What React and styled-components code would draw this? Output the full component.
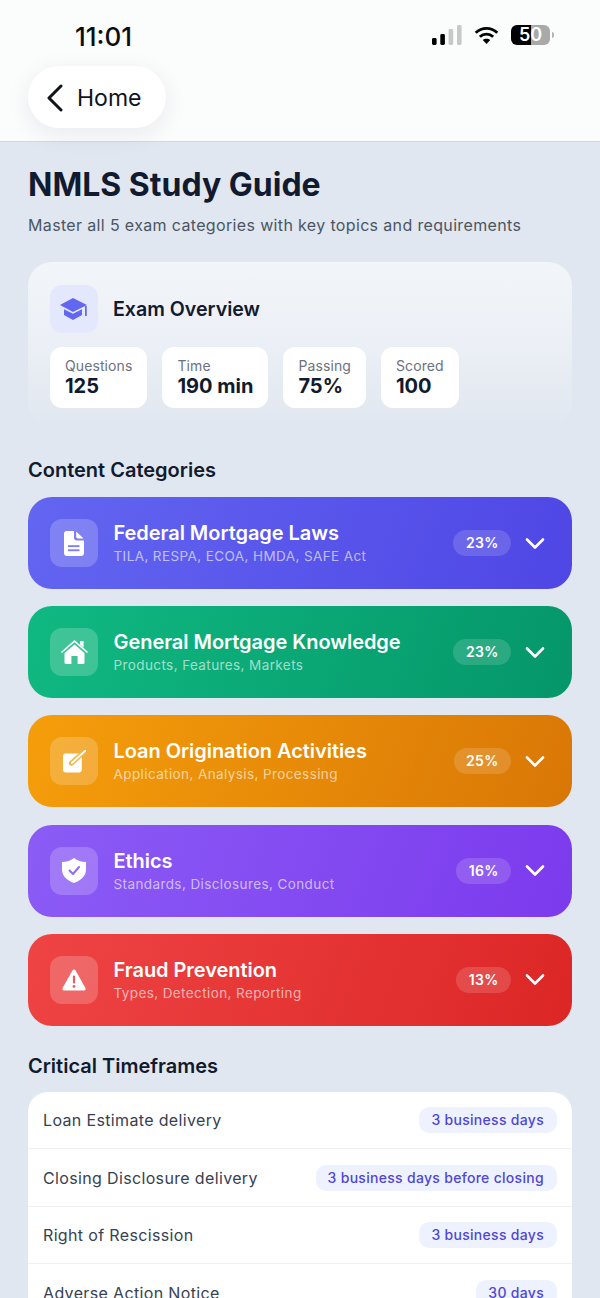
import React from "react";
import styled, { createGlobalStyle } from "styled-components";

const Global = createGlobalStyle`
  html, body { margin: 0; padding: 0; background: #e1e7f0; }
  body { font-family: Inter, "Liberation Sans", sans-serif; -webkit-font-smoothing: antialiased; }
  * { box-sizing: border-box; }
`;

const Page = styled.div`
  width: 600px;
  height: 1298px;
  overflow: hidden;
  background: #e1e7f0;
`;

const Header = styled.header`
  height: 142px;
  background: #fbfcfc;
  border-bottom: 1px solid #d4d8dd;
  padding: 0 28px;
`;

const StatusBar = styled.div`
  height: 66px;
  display: flex;
  align-items: center;
  justify-content: space-between;
  padding: 6px 18px 0 47px;
`;

const Clock = styled.span`
  font-size: 26px;
  font-weight: 500;
  color: #0b0d12;
`;

const StatusIcons = styled.div`
  display: flex;
  align-items: center;
  gap: 11px;
  margin-top: -2px;
`;

const Battery = styled.div`
  width: 39px;
  height: 20px;
  border-radius: 6px;
  background: linear-gradient(90deg, #000 51%, #a9a9a9 51%);
  color: #fff;
  font-size: 18px;
  font-weight: 600;
  line-height: 20px;
  text-align: center;
`;

const BatteryCap = styled.div`
  width: 2px;
  height: 6px;
  margin-left: -9px;
  border-radius: 0 2px 2px 0;
  background: #b5b5b5;
`;

const BackPill = styled.div`
  width: 138px;
  height: 62px;
  border-radius: 31px;
  background: #fff;
  box-shadow: 0 6px 24px rgba(20, 30, 50, 0.08);
  display: flex;
  align-items: center;
  gap: 13px;
  padding: 1px 0 0 18px;
  font-size: 23px;
  font-weight: 400;
  color: #10131a;
`;

const Main = styled.main`
  padding: 24px 28px 0;
`;

const Title = styled.h1`
  margin: 0;
  font-size: 32px;
  line-height: 38px;
  font-weight: 700;
  color: #111a2e;
`;

const Subtitle = styled.p`
  margin: 9px 0 0;
  font-size: 16px;
  line-height: 24px;
  letter-spacing: 0.35px;
  color: #4b5563;
`;

const Overview = styled.section`
  margin-top: 25px;
  height: 164px;
  border-radius: 24px;
  padding: 23px 22px;
  background: linear-gradient(180deg, #f2f5f9 0%, #edf1f7 40%, #e1e7f0 100%);
`;

const OverviewHead = styled.div`
  display: flex;
  align-items: center;
  gap: 15px;
`;

const OverviewIcon = styled.div`
  width: 48px;
  height: 48px;
  border-radius: 12px;
  background: #e4e8fd;
  display: flex;
  align-items: center;
  justify-content: center;
`;

const OverviewTitle = styled.h2`
  margin: 0 0 1px;
  font-size: 19.6px;
  font-weight: 600;
  color: #111a2e;
`;

const Stats = styled.div`
  display: flex;
  gap: 15px;
  margin-top: 14px;
`;

const Stat = styled.div`
  height: 61px;
  border-radius: 12px;
  background: #fff;
  padding: 10px 15px 0;
`;

const StatLabel = styled.div`
  font-size: 14px;
  line-height: 17px;
  letter-spacing: 0.1px;
  color: #6b7280;
`;

const StatValue = styled.div`
  font-size: 20px;
  line-height: 24px;
  font-weight: 700;
  color: #111a2e;
`;

const SectionTitle = styled.h2`
  margin: 32px 0 0;
  font-size: 20px;
  line-height: 24px;
  font-weight: 600;
  color: #111a2e;
`;

const Categories = styled.div`
  display: flex;
  flex-direction: column;
  gap: 17.2px;
  margin-top: 15px;
`;

const CategoryCard = styled.div`
  height: 92px;
  border-radius: 24px;
  padding: 0 27px 0 22px;
  display: flex;
  align-items: center;
  background: linear-gradient(110deg, ${(p) => p.$from}, ${(p) => p.$to});
`;

const CategoryIcon = styled.div`
  width: 48px;
  height: 48px;
  border-radius: 12px;
  background: rgba(255, 255, 255, 0.2);
  display: flex;
  align-items: center;
  justify-content: center;
  flex-shrink: 0;
`;

const CategoryText = styled.div`
  margin-left: 15.5px;
  flex: 1;
`;

const CategoryName = styled.div`
  font-size: 20px;
  line-height: 24px;
  font-weight: 600;
  letter-spacing: -0.05px;
  color: #fff;
`;

const CategoryTopics = styled.div`
  margin-top: 2px;
  font-size: 13.5px;
  line-height: 18px;
  letter-spacing: 0.4px;
  color: rgba(255, 255, 255, 0.62);
`;

const Percent = styled.div`
  height: 26px;
  padding: 0 12.5px;
  border-radius: 13px;
  background: rgba(255, 255, 255, 0.15);
  color: #fff;
  font-size: 14px;
  font-weight: 600;
  line-height: 26px;
  letter-spacing: 0.3px;
  margin-right: 14px;
`;

const TimeframesTitle = styled(SectionTitle)`
  margin-top: 28px;
`;

const Timeframes = styled.div`
  margin-top: 14px;
  border-radius: 20px;
  background: #fff;
`;

const TimeRow = styled.div`
  height: 57.5px;
  padding: 0 15px;
  display: flex;
  align-items: center;
  justify-content: space-between;
  border-bottom: 1px solid #eef0f4;
`;

const TimeLabel = styled.span`
  font-size: 16px;
  letter-spacing: 0.35px;
  color: #374151;
`;

const TimeValue = styled.span`
  height: 26px;
  padding: 0 13px 0 12px;
  border-radius: 10px;
  background: #eef2fe;
  color: #4f46d5;
  font-size: 14px;
  font-weight: 500;
  line-height: 26px;
  letter-spacing: 0.3px;
`;

const Signal = () => (
  <svg width="30" height="20" viewBox="0 0 30 20">
    <rect x="0" y="13" width="4.6" height="7" rx="1.4" fill="#000" />
    <rect x="8.3" y="9" width="4.6" height="11" rx="1.4" fill="#000" />
    <rect x="16.6" y="4" width="4.6" height="16" rx="1.4" fill="#c8c8c8" />
    <rect x="25" y="0" width="4.6" height="20" rx="1.4" fill="#c8c8c8" />
  </svg>
);

const Wifi = () => (
  <svg width="27" height="18" viewBox="0 0 28 20" fill="none" stroke="#000" strokeWidth="3.2">
    <path d="M2 7.5 C9 1 19 1 26 7.5" />
    <path d="M6.6 12 C11 8 17 8 21.4 12" />
    <path d="M14 20 L9.8 15.6 C12 13.6 16 13.6 18.2 15.6 Z" fill="#000" stroke="none" />
  </svg>
);

const Chevron = ({ size = 20 }) => (
  <svg width={size} height={size * 0.65} viewBox="0 0 20 13" fill="none" stroke="#fff" strokeWidth="2.6" strokeLinecap="round" strokeLinejoin="round">
    <path d="M2 2.5 L10 10.5 L18 2.5" />
  </svg>
);

const BackArrow = () => (
  <svg width="18" height="28" viewBox="0 0 18 28" fill="none" stroke="#10131a" strokeWidth="3" strokeLinecap="round" strokeLinejoin="round">
    <path d="M15 2 L3 14 L15 26" />
  </svg>
);

const CapIcon = () => (
  <svg width="28" height="22" viewBox="0 0 28 22">
    <path d="M13 0 L27 7 L13 14 L0 7 Z" fill="#6366f1" />
    <path d="M4 11.2 L13 15.8 L22 11.2 V17 L13 22 L4 17 Z" fill="#6366f1" />
    <rect x="25" y="8" width="1.7" height="10" fill="#6366f1" />
  </svg>
);

const DocIcon = () => (
  <svg width="20" height="25" viewBox="0 0 20 25">
    <path d="M2.5 0 H10 V6.5 Q10 9.5 13 9.5 H20 V22 Q20 25 17 25 H3 Q0 25 0 22 V2.5 Q0 0 2.5 0 Z" fill="#fff" />
    <path d="M12.2 0.6 L19.6 7.6 H14 Q12.2 7.6 12.2 5.8 Z" fill="#fff" />
    <rect x="4" y="14.2" width="11.5" height="1.9" fill="#817ff5" />
    <rect x="4" y="18.3" width="11.5" height="1.9" fill="#817ff5" />
  </svg>
);

const HomeIcon = () => (
  <svg width="27" height="24" viewBox="0 0 27 24">
    <path d="M1 12 L13.5 1.2 L26 12" fill="none" stroke="#fff" strokeWidth="1.6" strokeLinecap="round" strokeLinejoin="round" />
    <path d="M19 1 H22.6 V7.6 L19 4.4 Z" fill="#fff" />
    <path d="M13.5 4.4 L23.5 13 V22.5 Q23.5 24 22 24 H16.6 V16 H10.4 V24 H5 Q3.5 24 3.5 22.5 V13 Z" fill="#fff" />
  </svg>
);

const EditIcon = () => (
  <svg width="23" height="23" viewBox="0 0 23 23">
    <rect x="0" y="3.4" width="18.8" height="19" rx="2.4" fill="#fff" />
    <path d="M8.5 13.2 L17.5 5 L22.5 0.6" stroke="#f6b33f" strokeWidth="5" strokeLinecap="round" />
    <path d="M8.8 13 L22.4 0.8" stroke="#fff" strokeWidth="1.9" strokeLinecap="round" />
  </svg>
);

const ShieldIcon = () => (
  <svg width="24" height="25" viewBox="0 0 24 25">
    <path d="M12 0 C15.5 2.8 19.5 3.8 24 4 V11.5 C24 18 19 22.5 12 25 C5 22.5 0 18 0 11.5 V4 C4.5 3.8 8.5 2.8 12 0 Z" fill="#fff" />
    <path d="M7.5 12.5 L11 16 L17 9" fill="none" stroke="#8f6cf5" strokeWidth="2" strokeLinecap="round" strokeLinejoin="round" />
  </svg>
);

const AlertIcon = () => (
  <svg width="24" height="22" viewBox="0 0 24 22">
    <path d="M12 0.5 Q13 0.5 13.6 1.6 L23.4 19 Q24.2 21 22 21.4 H2 Q-0.2 21 0.6 19 L10.4 1.6 Q11 0.5 12 0.5 Z" fill="#fff" />
    <rect x="10.9" y="6.5" width="2.2" height="8" rx="1" fill="#ee5a60" />
    <circle cx="12" cy="17.4" r="1.4" fill="#ee5a60" />
  </svg>
);

const stats = [
  { label: "Questions", value: "125" },
  { label: "Time", value: "190 min" },
  { label: "Passing", value: "75%" },
  { label: "Scored", value: "100" },
];

const categories = [
  { name: "Federal Mortgage Laws", topics: "TILA, RESPA, ECOA, HMDA, SAFE Act", pct: "23%", from: "#6366f1", to: "#4f46e5", icon: <DocIcon /> },
  { name: "General Mortgage Knowledge", topics: "Products, Features, Markets", pct: "23%", from: "#10b981", to: "#059669", icon: <HomeIcon /> },
  { name: "Loan Origination Activities", topics: "Application, Analysis, Processing", pct: "25%", from: "#f59e0b", to: "#d97706", icon: <EditIcon /> },
  { name: "Ethics", topics: "Standards, Disclosures, Conduct", pct: "16%", from: "#8b5cf6", to: "#7c3aed", icon: <ShieldIcon /> },
  { name: "Fraud Prevention", topics: "Types, Detection, Reporting", pct: "13%", from: "#ef4444", to: "#dc2626", icon: <AlertIcon /> },
];

const timeframes = [
  { label: "Loan Estimate delivery", value: "3 business days" },
  { label: "Closing Disclosure delivery", value: "3 business days before closing" },
  { label: "Right of Rescission", value: "3 business days" },
  { label: "Adverse Action Notice", value: "30 days" },
];

export default function App() {
  return (
    <Page>
      <Global />
      <Header>
        <StatusBar>
          <Clock>11:01</Clock>
          <StatusIcons>
            <Signal />
            <Wifi />
            <Battery>50</Battery>
            <BatteryCap />
          </StatusIcons>
        </StatusBar>
        <BackPill>
          <BackArrow />
          Home
        </BackPill>
      </Header>
      <Main>
        <Title>NMLS Study Guide</Title>
        <Subtitle>Master all 5 exam categories with key topics and requirements</Subtitle>
        <Overview>
          <OverviewHead>
            <OverviewIcon>
              <CapIcon />
            </OverviewIcon>
            <OverviewTitle>Exam Overview</OverviewTitle>
          </OverviewHead>
          <Stats>
            {stats.map((s) => (
              <Stat key={s.label}>
                <StatLabel>{s.label}</StatLabel>
                <StatValue>{s.value}</StatValue>
              </Stat>
            ))}
          </Stats>
        </Overview>
        <SectionTitle>Content Categories</SectionTitle>
        <Categories>
          {categories.map((c) => (
            <CategoryCard key={c.name} $from={c.from} $to={c.to}>
              <CategoryIcon>{c.icon}</CategoryIcon>
              <CategoryText>
                <CategoryName>{c.name}</CategoryName>
                <CategoryTopics>{c.topics}</CategoryTopics>
              </CategoryText>
              <Percent>{c.pct}</Percent>
              <Chevron />
            </CategoryCard>
          ))}
        </Categories>
        <TimeframesTitle>Critical Timeframes</TimeframesTitle>
        <Timeframes>
          {timeframes.map((t) => (
            <TimeRow key={t.label}>
              <TimeLabel>{t.label}</TimeLabel>
              <TimeValue>{t.value}</TimeValue>
            </TimeRow>
          ))}
        </Timeframes>
      </Main>
    </Page>
  );
}
